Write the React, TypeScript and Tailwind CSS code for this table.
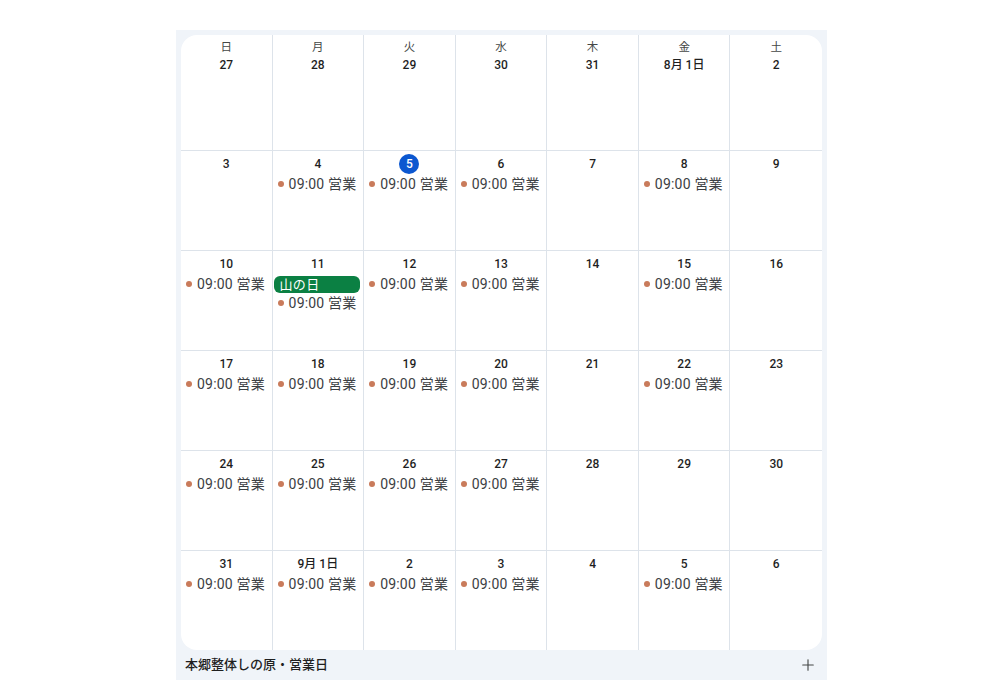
import React from 'react';
import { Plus } from 'lucide-react';

type Day = { label: string; ev?: boolean; today?: boolean; holiday?: string };

const DOW = ['日', '月', '火', '水', '木', '金', '土'];

const d = (label: string, ev = false, extra: Partial<Day> = {}): Day => ({ label, ev, ...extra });

const WEEKS: Day[][] = [
  [d('27'), d('28'), d('29'), d('30'), d('31'), d('8月 1日'), d('2')],
  [d('3'), d('4', true), d('5', true, { today: true }), d('6', true), d('7'), d('8', true), d('9')],
  [d('10', true), d('11', true, { holiday: '山の日' }), d('12', true), d('13', true), d('14'), d('15', true), d('16')],
  [d('17', true), d('18', true), d('19', true), d('20', true), d('21'), d('22', true), d('23')],
  [d('24', true), d('25', true), d('26', true), d('27', true), d('28'), d('29'), d('30')],
  [d('31', true), d('9月 1日', true), d('2', true), d('3', true), d('4'), d('5', true), d('6')],
];

const FONT = { fontFamily: 'Roboto, "Noto Sans CJK JP", sans-serif' };

function Cell({ day, row, col }: { day: Day; row: number; col: number }) {
  const lastCol = col === 6;
  const lastRow = row === WEEKS.length - 1;
  return (
    <div
      className={`flex flex-col items-stretch min-w-0 ${lastCol ? '' : 'border-r'} ${lastRow ? '' : 'border-b'} border-[#dde3ea] ${row === 0 ? 'pt-[4px]' : 'pt-[3px]'}`}
    >
      {row === 0 && (
        <div className="text-center text-[11.5px] leading-[16px] text-[#444746]">{DOW[col]}</div>
      )}
      <div className="flex justify-center h-[20px] items-center">
        {day.today ? (
          <span className="w-[20px] h-[20px] rounded-full bg-[#0b57d0] text-white text-[12px] font-medium flex items-center justify-center">
            {day.label}
          </span>
        ) : (
          <span className="text-[12px] font-medium text-[#1f1f1f]">{day.label}</span>
        )}
      </div>
      {day.holiday && (
        <div className="mt-[2px] ml-[1px] mr-[3px] h-[17px] rounded-[6px] bg-[#0b8043] text-white text-[13px] leading-[17px] pl-[6px] tracking-[0.3px]">
          {day.holiday}
        </div>
      )}
      {day.ev && (
        <div className="flex items-center pl-[5px] whitespace-nowrap h-[20px]">
          <span className="w-[6px] h-[6px] rounded-full bg-[#c97b5b] shrink-0" />
          <span className="ml-[5px] text-[14px] tracking-[0.2px] text-[#3c4043]">09:00 営業</span>
        </div>
      )}
    </div>
  );
}

export default function App() {
  return (
    <div className="w-[1000px] h-[693px] bg-white" style={FONT}>
      <div className="pl-[176px] pt-[30px]">
        <div className="w-[651px] bg-[#f0f4f9] px-[5px] pt-[5px]">
          <div className="bg-white rounded-[16px] grid grid-cols-7 grid-rows-[116px_repeat(5,100px)] h-[615px] overflow-hidden">
            {WEEKS.map((week, r) =>
              week.map((day, c) => <Cell key={`${r}-${c}`} day={day} row={r} col={c} />)
            )}
          </div>
          <div className="h-[30px] flex items-center justify-between pl-[4px] pr-[5px]">
            <span className="text-[13px] font-medium text-[#1f1f1f]">本郷整体しの原・営業日</span>
            <Plus size={18} strokeWidth={1.5} className="text-[#444746]" />
          </div>
        </div>
      </div>
    </div>
  );
}
